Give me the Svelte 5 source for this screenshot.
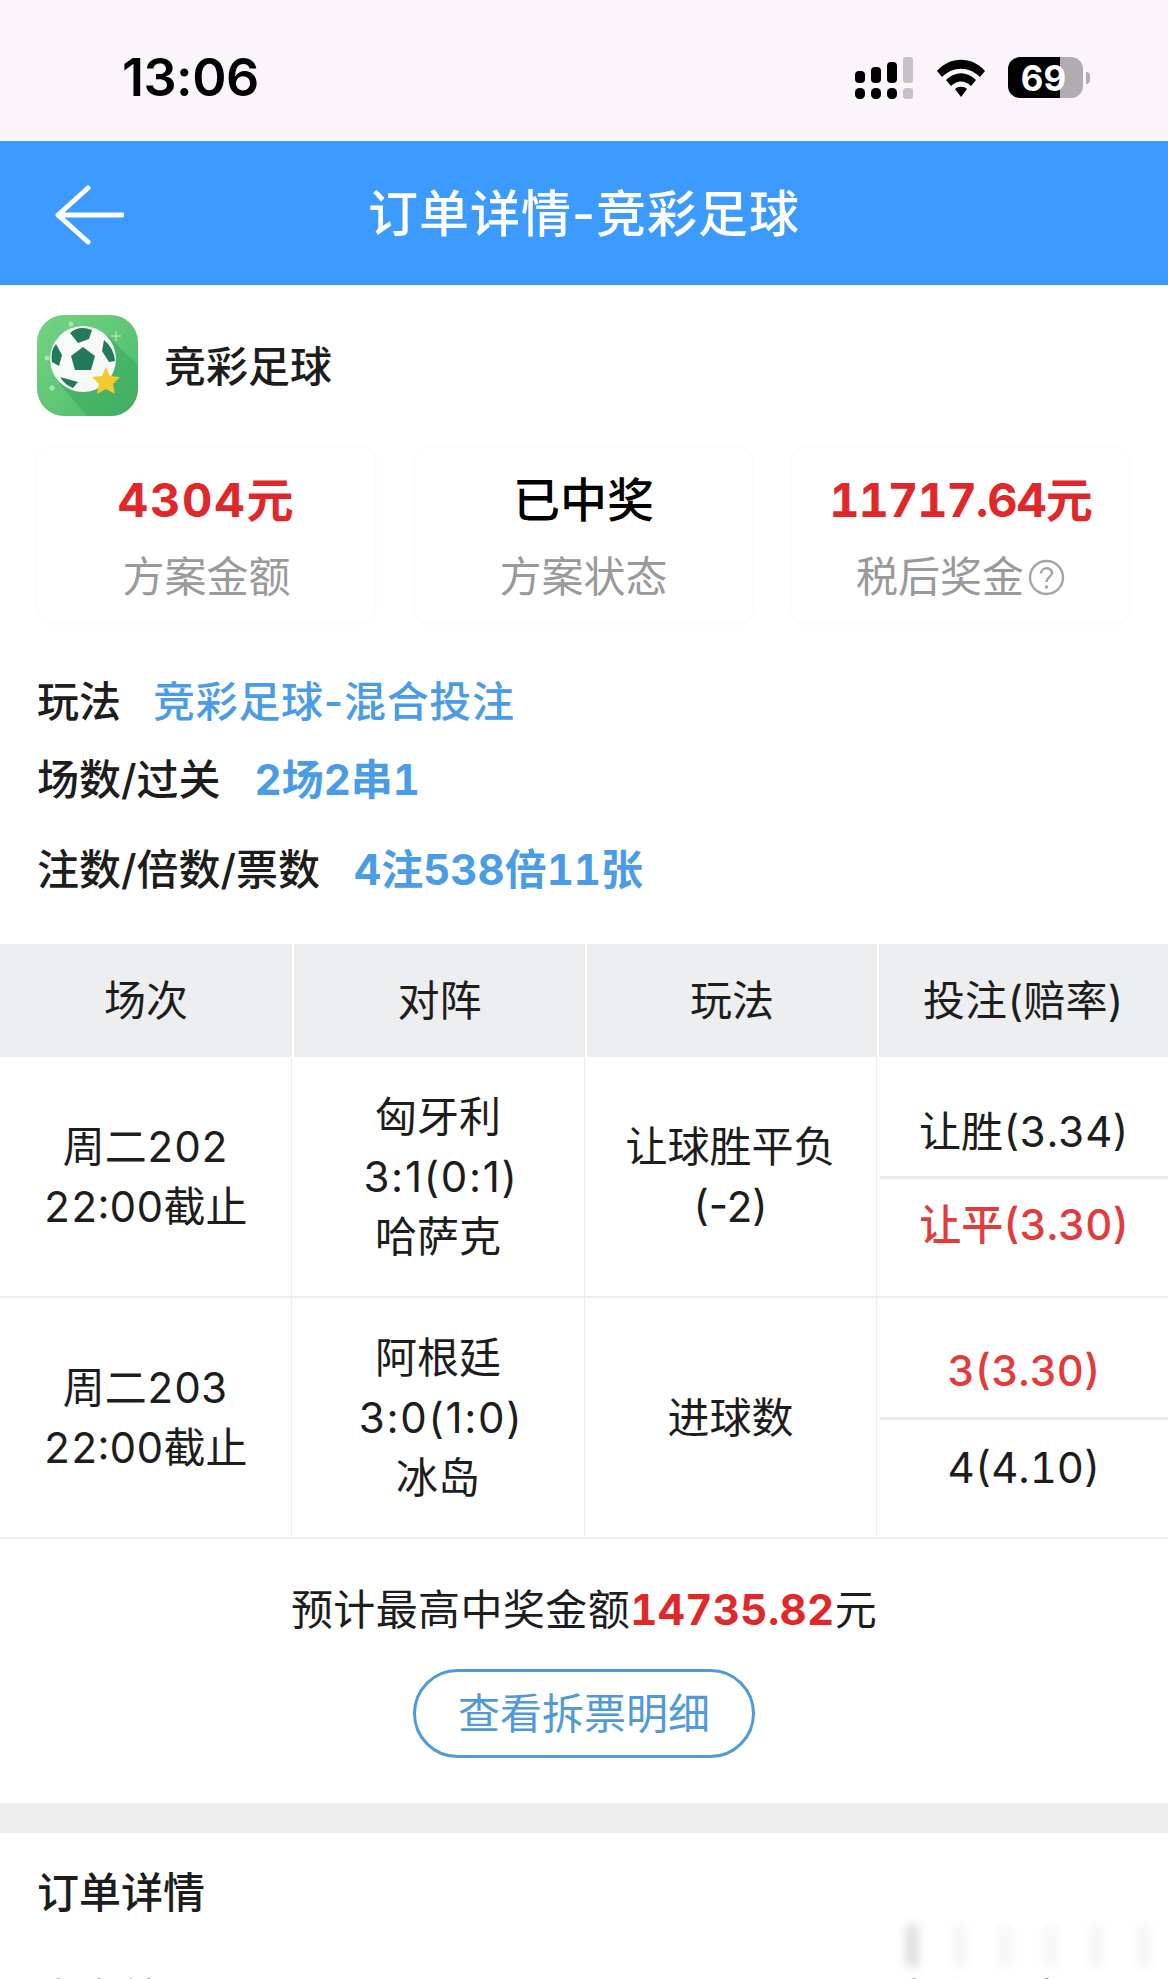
<script>
	const stats = [
		{ value: '4304元', label: '方案金额', tone: 'red' },
		{ value: '已中奖', label: '方案状态', tone: 'black' },
		{ value: '11717.64元', label: '税后奖金', tone: 'red', help: true }
	];

	const info = [
		{ name: '玩法', value: '竞彩足球-混合投注', cls: 'first' },
		{ name: '场数/过关', value: '2场2串1', cls: 'second' },
		{ name: '注数/倍数/票数', value: '4注538倍11张', cls: 'third' }
	];

	const matches = [
		{
			no: ['周二202', '22:00截止'],
			vs: ['匈牙利', '3:1(0:1)', '哈萨克'],
			play: ['让球胜平负', '(-2)'],
			bets: [
				{ text: '让胜(3.34)', win: false },
				{ text: '让平(3.30)', win: true }
			]
		},
		{
			no: ['周二203', '22:00截止'],
			vs: ['阿根廷', '3:0(1:0)', '冰岛'],
			play: ['进球数'],
			bets: [
				{ text: '3(3.30)', win: true },
				{ text: '4(4.10)', win: false }
			]
		}
	];
</script>

<main>
	<div class="status">
		<span class="time">13:06</span>
		<div class="status-icons">
			<svg width="60" height="42" viewBox="0 0 60 42">
				<rect x="1" y="14" width="10" height="12" rx="4" fill="#000" />
				<rect x="17" y="10" width="10" height="16" rx="4" fill="#000" />
				<rect x="33" y="5" width="10" height="21" rx="4" fill="#000" />
				<rect x="49" y="0" width="10" height="26" rx="3" fill="#c6c2c8" />
				<rect x="1" y="31" width="10" height="11" rx="4.5" fill="#000" />
				<rect x="17" y="31" width="10" height="11" rx="4.5" fill="#000" />
				<rect x="33" y="31" width="10" height="11" rx="4.5" fill="#000" />
				<rect x="49" y="31" width="10" height="11" rx="3" fill="#c6c2c8" />
			</svg>
			<svg width="50" height="38" viewBox="0 0 50 38">
				<path d="M1 12 C14 -3 36 -3 49 12 L44 18 C33 7 17 7 6 18 Z" fill="#000" />
				<path d="M10 21 C19 12 31 12 40 21 L35 27 C29 21 21 21 15 27 Z" fill="#000" />
				<path d="M19 30 C22 27 28 27 31 30 L25 38 Z" fill="#000" />
			</svg>
			<div class="battery">
				<div class="battery-body"><span>69</span></div>
				<i></i>
			</div>
		</div>
	</div>

	<header>
		<svg class="back" width="70" height="60" viewBox="0 0 70 60">
			<path d="M34 3 L4 30 L34 57 M4 30 L68 30" fill="none" stroke="#fff" stroke-width="5" stroke-linecap="round" stroke-linejoin="round" />
		</svg>
		<h1>订单详情-竞彩足球</h1>
	</header>

	<section class="top">
		<div class="app">
			<svg class="logo" width="101" height="101" viewBox="0 0 101 101">
				<defs>
					<linearGradient id="bg" x1="0" y1="0" x2="1" y2="1">
						<stop offset="0" stop-color="#74d482" />
						<stop offset="1" stop-color="#4cba6a" />
					</linearGradient>
					<clipPath id="ball"><circle cx="46" cy="44" r="33" /></clipPath>
					<clipPath id="tile"><rect width="101" height="101" rx="27" /></clipPath>
				</defs>
				<rect width="101" height="101" rx="27" fill="url(#bg)" />
				<path d="M70 20 L101 50 L101 101 L50 101 L22 68 Z" fill="#3ba85f" opacity="0.6" clip-path="url(#tile)" />
				<circle cx="46" cy="44" r="33" fill="#f7f9f7" />
				<g clip-path="url(#ball)" fill="#22795c">
					<path d="M46 32 L58 41 L54 55 L38 55 L34 41 Z" />
					<path d="M33 18 Q42 10 55 15 L52 24 L41 28 Z" />
					<path d="M19 29 L25 40 L22 51 L15 47 Q13 36 19 29 Z" />
					<path d="M67 25 Q77 33 78 46 L72 47 L65 36 Z" />
					<path d="M23 62 L41 67 L36 73 Q28 70 23 62 Z" />
				</g>
				<path d="M69 52 L73 61 L83 62 L76 69 L78 79 L69 74 L60 79 L62 69 L55 62 L65 61 Z" fill="#f6c92d" />
				<circle cx="34" cy="9" r="2.5" fill="#a8e5b4" />
				<circle cx="10" cy="43" r="2.5" fill="#a8e5b4" />
				<circle cx="15" cy="73" r="2.5" fill="#a8e5b4" />
				<path d="M79 16 V26 M74 21 H84" stroke="#c9f0d2" stroke-width="1" />
			</svg>
			<span>竞彩足球</span>
		</div>

		<div class="stats">
			{#each stats as stat}
				<div class="stat">
					<div class="value {stat.tone}">{stat.value}</div>
					<div class="label">
						{stat.label}{#if stat.help}
							<svg class="help" width="37" height="37" viewBox="0 0 37 37">
								<circle cx="18.5" cy="18.5" r="16.5" fill="none" stroke="#a5a5a5" stroke-width="2.4" />
								<path d="M13 14.5 C13 7.5 24 7.5 24 14 C24 18 18.5 18 18.5 23" fill="none" stroke="#a5a5a5" stroke-width="2.4" />
								<circle cx="18.5" cy="28" r="1.7" fill="#a5a5a5" />
							</svg>
						{/if}
					</div>
				</div>
			{/each}
		</div>

		<div class="info">
			{#each info as row}
				<div class="info-row {row.cls}">
					<span class="name">{row.name}</span>
					<span class="val">{row.value}</span>
				</div>
			{/each}
		</div>
	</section>

	<div class="table">
		<div class="thead">
			<div>场次</div>
			<div>对阵</div>
			<div>玩法</div>
			<div>投注(赔率)</div>
		</div>
		{#each matches as m}
			<div class="tr">
				<div class="td">
					{#each m.no as line}<p>{line}</p>{/each}
				</div>
				<div class="td">
					{#each m.vs as line, i}<p class:score={i === 1}>{line}</p>{/each}
				</div>
				<div class="td play">
					{#each m.play as line}<p>{line}</p>{/each}
				</div>
				<div class="td bets">
					{#each m.bets as bet}
						<div class="bet" class:win={bet.win}>{bet.text}</div>
					{/each}
				</div>
			</div>
		{/each}
	</div>

	<section class="total">
		<p>预计最高中奖金额<b>14735.82</b>元</p>
		<button>查看拆票明细</button>
	</section>

	<div class="band"></div>

	<section class="detail">
		<h2>订单详情</h2>
		<div class="detail-row">
			<span>方案编号</span>
			<span>竞彩足球</span>
		</div>
		<div class="smudge"></div>
	</section>
</main>

<style>
	:global(body) {
		margin: 0;
		background: #fff;
	}
	main {
		width: 1168px;
		height: 1979px;
		overflow: hidden;
		font-family: Inter, 'Noto Sans CJK SC', sans-serif;
		font-variant-numeric: tabular-nums;
		color: #1d1d1d;
	}
	.status {
		height: 141px;
		background: #fbf5fb;
		display: flex;
		align-items: center;
		justify-content: space-between;
		padding: 14px 78px 0 122px;
		box-sizing: border-box;
	}
	.time {
		font-size: 52px;
		font-weight: 600;
		color: #000;
		font-variant-numeric: normal;
		letter-spacing: -0.5px;
	}
	.status-icons {
		display: flex;
		align-items: center;
		gap: 22px;
	}
	.battery {
		display: flex;
		align-items: center;
		gap: 3px;
	}
	.battery-body {
		width: 75px;
		height: 41px;
		border-radius: 12px;
		background: linear-gradient(to right, #000 0 52px, #b0acb2 52px);
		display: flex;
		align-items: center;
		justify-content: center;
	}
	.battery-body span {
		color: #fff;
		font-size: 35px;
		font-weight: 700;
		margin-left: -4px;
	}
	.battery i {
		display: block;
		width: 4px;
		height: 12px;
		border-radius: 0 4px 4px 0;
		background: #b0acb2;
	}
	header {
		height: 144px;
		background: #3d9bff;
		display: flex;
		align-items: center;
		justify-content: center;
		position: relative;
	}
	.back {
		position: absolute;
		left: 54px;
		top: 44px;
	}
	h1 {
		margin: 0 0 6px;
		font-size: 50px;
		font-weight: 500;
		color: #fff;
		letter-spacing: 1px;
		font-variant-numeric: normal;
	}
	.top {
		padding: 30px 38px 0;
		height: 659px;
		box-sizing: border-box;
	}
	.app {
		display: flex;
		align-items: center;
		gap: 27px;
		font-size: 42px;
		font-weight: 500;
		margin-left: -1px;
	}
	.app span {
		margin: -4px 0 0 -1px;
	}
	.stats {
		display: grid;
		grid-template-columns: repeat(3, 337px);
		gap: 40px;
		margin-top: 32px;
	}
	.stat {
		height: 175px;
		border-radius: 14px;
		box-shadow: 0 0 5px rgba(0, 0, 0, 0.04);
		text-align: center;
		box-sizing: border-box;
		padding-top: 21px;
	}
	.value {
		font-size: 47px;
		line-height: 62px;
		font-weight: 700;
	}
	.value.red {
		color: #e0282a;
		letter-spacing: 1.8px;
	}
	.stat:last-child .value.red {
		letter-spacing: -1.1px;
	}
	.value.black {
		color: #000;
		font-weight: 500;
	}
	.label {
		font-size: 42px;
		line-height: 62px;
		margin-top: 15px;
		color: #9a9a9a;
		display: flex;
		align-items: center;
		justify-content: center;
	}
	.help {
		margin-left: 4px;
	}
	.info-row {
		display: flex;
		gap: 34px;
		font-size: 42px;
		font-weight: 500;
		line-height: 50px;
		margin-left: -1px;
	}
	.info-row.first {
		margin-top: 54px;
		gap: 32px;
	}
	.info-row.second {
		margin-top: 28px;
	}
	.info-row.third {
		margin-top: 40px;
	}
	.val {
		color: #4a9ce6;
		font-weight: 700;
	}
	.first .val {
		font-weight: 500;
		letter-spacing: 0.7px;
		font-variant-numeric: normal;
	}
	.thead {
		display: grid;
		grid-template-columns: 292px 291px 290px 289px;
		gap: 2px;
		height: 113px;
		font-size: 42px;
		line-height: 113px;
		text-align: center;
	}
	.thead div {
		background: #eceef0;
	}
	.tr {
		display: grid;
		grid-template-columns: 292px 293px 292px 291px;
		height: 241px;
		border-bottom: 2px solid #efefef;
		box-sizing: border-box;
		font-size: 42px;
	}
	.td {
		display: flex;
		flex-direction: column;
		align-items: center;
		justify-content: center;
		border-right: 1px solid #ededed;
		box-sizing: border-box;
	}
	.td:last-child {
		border-right: 0;
	}
	.td p {
		margin: 0;
		line-height: 60px;
		white-space: nowrap;
	}
	.td p.score {
		font-variant-numeric: normal;
		letter-spacing: 1.7px;
		margin-left: 6px;
	}
	.play p {
		font-variant-numeric: normal;
	}
	.bets {
		justify-content: flex-start;
		align-items: stretch;
		padding-left: 3px;
	}
	.bet {
		display: flex;
		align-items: center;
		justify-content: center;
		white-space: nowrap;
	}
	.bet:first-child {
		height: 122px;
		box-sizing: border-box;
		padding-top: 26px;
		border-bottom: 3px solid #ebebeb;
	}
	.bet:last-child {
		height: 94px;
	}
	.tr:nth-child(2) .bet:first-child {
		padding-top: 23px;
	}
	.tr:nth-child(2) .bet:last-child {
		height: 84px;
	}
	.bet.win {
		color: #e23b3b;
		font-weight: 500;
	}
	.total {
		height: 264px;
		box-sizing: border-box;
		padding-top: 40px;
		text-align: center;
	}
	.total p {
		margin: 0;
		font-size: 42px;
		line-height: 62px;
		letter-spacing: 0.4px;
	}
	.total b {
		color: #e0282a;
		font-weight: 700;
	}
	.total button {
		display: block;
		width: 342px;
		height: 89px;
		margin: 28px auto 0;
		padding: 0 0 6px;
		background: #fff;
		border: 3px solid #509ad9;
		border-radius: 45px;
		color: #509ad9;
		font: inherit;
		font-size: 42px;
	}
	.band {
		height: 30px;
		background: #eeeeee;
	}
	.detail {
		padding: 35px 37px 0;
		position: relative;
	}
	h2 {
		margin: 0;
		font-size: 42px;
		line-height: 50px;
		font-weight: 500;
	}
	.detail-row {
		display: flex;
		justify-content: space-between;
		margin-top: 56px;
		font-size: 42px;
		line-height: 50px;
		color: #777;
		padding-right: 70px;
	}
	/* blurred-out watermark over the corner */
	.smudge {
		position: absolute;
		left: 906px;
		top: 92px;
		width: 250px;
		height: 42px;
		background:
			linear-gradient(to right, rgba(0, 0, 0, 0.1) 0 12px, transparent 12px),
			repeating-linear-gradient(to right, rgba(0, 0, 0, 0.035) 0 14px, transparent 14px 46px);
		filter: blur(5px);
	}
</style>
